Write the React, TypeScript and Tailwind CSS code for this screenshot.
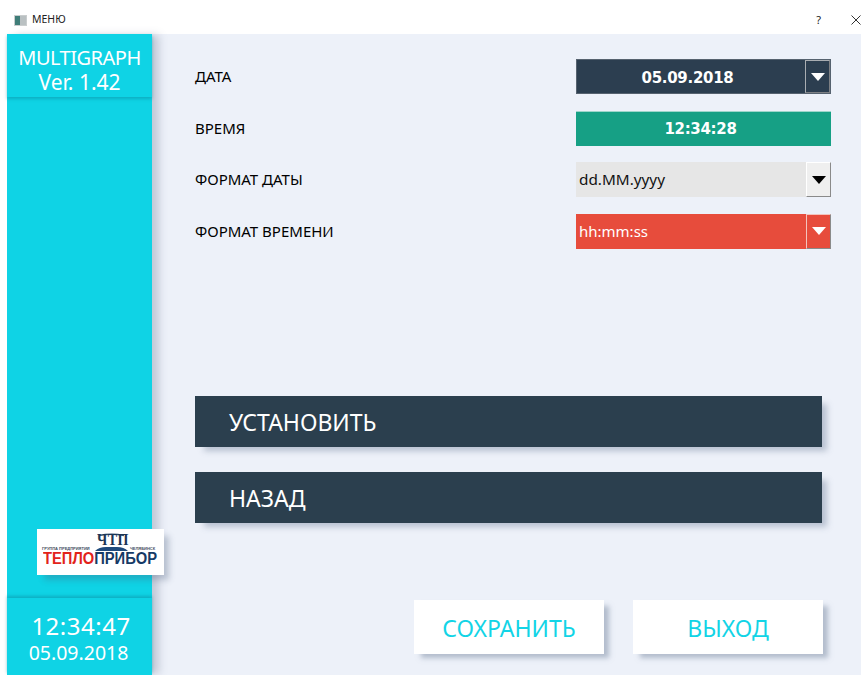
import { ReactNode } from 'react';

const FONT = "font-['Noto_Sans','Liberation_Sans',sans-serif]";

const Arrow = ({ color }: { color: string }) => (
  <svg width="14" height="8" viewBox="0 0 14 8" className="block">
    <polygon points="0,0 14,0 7,8" fill={color} />
  </svg>
);

const ComboButton = ({ className, arrow }: { className: string; arrow: string }) => (
  <div className={`w-[25px] h-full shrink-0 flex items-center justify-center border ${className}`}>
    <Arrow color={arrow} />
  </div>
);

const FieldRow = ({ label, children }: { label: string; children: ReactNode }) => (
  <div className="flex items-center justify-between h-[35px] w-[636px]">
    <span className="text-[15px] text-black">{label}</span>
    <div className="w-[255px] h-full">{children}</div>
  </div>
);

const WideButton = ({ label }: { label: string }) => (
  <div className="w-[627px] h-[51px] pl-[34px] pt-[2px] flex items-center bg-[#2b3f4e] text-white text-[23px] shadow-[7px_6px_6px_-2px_rgba(120,135,160,0.45)]">
    {label}
  </div>
);

const LightButton = ({ label }: { label: string }) => (
  <div className="w-[190px] h-[54px] pt-[4px] flex items-center justify-center bg-white text-[#12d4e6] text-[23px] shadow-[6px_5px_5px_-1px_rgba(120,135,160,0.5)]">
    {label}
  </div>
);

const Logo = () => (
  <div className="absolute left-[30px] top-[495px] w-[127px] h-[46px] bg-white shadow-[6px_6px_6px_-1px_rgba(70,90,120,0.3)]">
    <svg width="35" height="18" viewBox="0 0 35 18" className="absolute left-[57px] top-[4px]">
      <path d="M5 2.5 Q17.5 0 30 2.5" fill="none" stroke="#33506f" strokeWidth="1.6" />
      <path d="M1 18 Q5 14 12 14 L23 14 Q30 14 34 18 Z" fill="#1f4a7c" />
    </svg>
    <span className="absolute left-[60px] top-[3px] origin-top scale-y-[1.2] text-[#1c3554] text-[14px] leading-[14px] font-bold tracking-[0.5px] font-['Liberation_Serif',serif]">
      ЧТП
    </span>
    <span className="absolute left-[5px] top-[17px] text-[#44505f] text-[4px] leading-[5px] font-bold font-['Liberation_Sans',sans-serif]">
      ГРУППА ПРЕДПРИЯТИЙ
    </span>
    <span className="absolute left-[93px] top-[17px] text-[#44505f] text-[4px] leading-[5px] font-bold font-['Liberation_Sans',sans-serif]">
      ЧЕЛЯБИНСК
    </span>
    <div className="absolute left-[6px] top-[20px] origin-left scale-x-[0.92] text-[16px] leading-[19px] font-bold font-['Liberation_Sans',sans-serif] whitespace-nowrap">
      <span className="text-[#e2231a]">ТЕПЛО</span>
      <span className="text-[#163a66]">ПРИБОР</span>
    </div>
  </div>
);

const App = () => {
  return (
    <div className={`w-[861px] h-[675px] overflow-hidden flex flex-col bg-white ${FONT}`}>
      {/* window title bar */}
      <div className="h-[34px] shrink-0 flex items-center pt-[6px] pl-[14px] text-[#222]">
        <div className="w-[13px] h-[11px] mr-[5px] bg-[#b9c0c2] border border-[#c9cdce] flex">
          <div className="w-[5px] h-full bg-[#3f7d78]" />
        </div>
        <span className="text-[10.5px]">МЕНЮ</span>
        <span className="ml-auto mr-[30px] text-[11px]">?</span>
        <svg width="10" height="10" viewBox="0 0 10 10">
          <path d="M0.5 0.5 L9.5 9.5 M9.5 0.5 L0.5 9.5" stroke="#333" strokeWidth="1" />
        </svg>
      </div>

      <div className="flex-1 flex pl-[7px]">
        {/* left panel */}
        <aside className="relative z-10 w-[145px] h-full flex flex-col bg-[#0fd3e5] text-white text-center shadow-[8px_0_8px_-1px_rgba(90,100,130,0.28)]">
          <div className="h-[63px] pt-[11px] leading-[25px] shadow-[0_2px_3px_rgba(10,130,150,0.45)]">
            <div className="text-[20px] tracking-[-0.5px]">MULTIGRAPH</div>
            <div className="text-[21px]">Ver. 1.42</div>
          </div>
          <div className="flex-1" />
          <div className="h-[77px] pt-[14px] shadow-[0_-2px_3px_rgba(10,130,150,0.45)]">
            <div className="text-[24px] leading-[28px] tracking-[0.5px] ml-[3px]">12:34:47</div>
            <div className="text-[19.5px] leading-[26px] -ml-[2px]">05.09.2018</div>
          </div>
          <Logo />
        </aside>

        {/* settings form */}
        <main className="flex-1 bg-[#edf1f9] pl-[43px] flex flex-col">
          <div className="mt-[25px] flex flex-col gap-[16.5px]">
            <FieldRow label="ДАТА">
              <div className="h-full flex items-center bg-[#2c3e50] text-white border border-[#56626f]">
                <span className="flex-1 pt-[3px] pr-[5px] -ml-[2px] text-center text-[15px] tracking-[-0.3px] font-bold font-['DejaVu_Sans',sans-serif]">05.09.2018</span>
                <ComboButton className="border-[#a9adb2] border-b-[#7e8084] border-r-[#7e8084]" arrow="#ffffff" />
              </div>
            </FieldRow>
            <FieldRow label="ВРЕМЯ">
              <div className="h-full flex items-center justify-center pt-[1px] pr-[6px] bg-[#16a085] text-white text-[15px] tracking-[-0.3px] font-bold font-['DejaVu_Sans',sans-serif] border-t border-[#9ed6cb]">
                12:34:28
              </div>
            </FieldRow>
            <FieldRow label="ФОРМАТ ДАТЫ">
              <div className="h-full flex items-center bg-[#e6e6e6] text-[#111] text-[15.3px]">
                <span className="flex-1 pl-[3px]">dd.MM.yyyy</span>
                <ComboButton className="bg-[#efefef] border-white border-b-[#8a8a8a] border-r-[#8a8a8a]" arrow="#000000" />
              </div>
            </FieldRow>
            <FieldRow label="ФОРМАТ ВРЕМЕНИ">
              <div className="h-full flex items-center bg-[#e74c3c] text-white text-[15px]">
                <span className="flex-1 pl-[3px]">hh:mm:ss</span>
                <ComboButton className="border-[#f3c4be] border-b-[#8a8a8a] border-r-[#8a8a8a]" arrow="#ffffff" />
              </div>
            </FieldRow>
          </div>

          <div className="mt-[147px] flex flex-col gap-[25px]">
            <WideButton label="УСТАНОВИТЬ" />
            <WideButton label="НАЗАД" />
          </div>

          <div className="mt-[77px] ml-[219px] flex gap-[29px]">
            <LightButton label="СОХРАНИТЬ" />
            <LightButton label="ВЫХОД" />
          </div>
        </main>
      </div>
    </div>
  );
};

export default App;
